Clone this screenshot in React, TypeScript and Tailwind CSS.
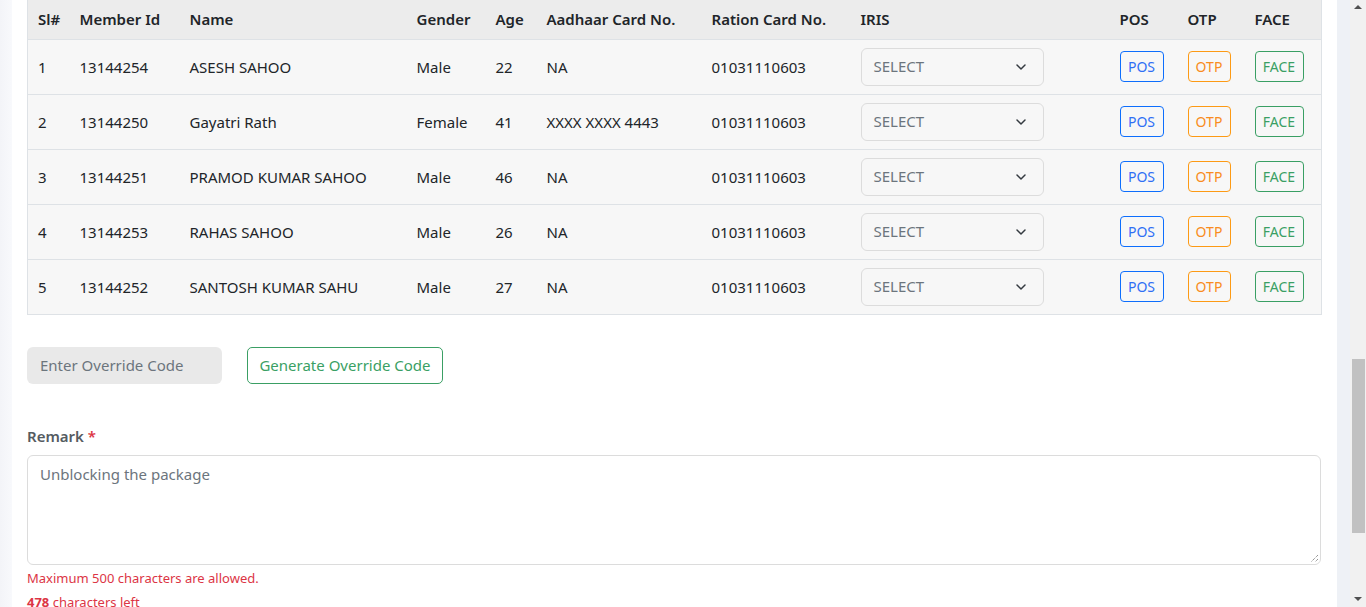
import { ChevronDown } from "lucide-react";

const members = [
  { sl: 1, id: "13144254", name: "ASESH SAHOO", gender: "Male", age: 22, aadhaar: "NA", ration: "01031110603" },
  { sl: 2, id: "13144250", name: "Gayatri Rath", gender: "Female", age: 41, aadhaar: "XXXX XXXX 4443", ration: "01031110603" },
  { sl: 3, id: "13144251", name: "PRAMOD KUMAR SAHOO", gender: "Male", age: 46, aadhaar: "NA", ration: "01031110603" },
  { sl: 4, id: "13144253", name: "RAHAS SAHOO", gender: "Male", age: 26, aadhaar: "NA", ration: "01031110603" },
  { sl: 5, id: "13144252", name: "SANTOSH KUMAR SAHU", gender: "Male", age: 27, aadhaar: "NA", ration: "01031110603" },
];

const headers = ["Sl#", "Member Id", "Name", "Gender", "Age", "Aadhaar Card No.", "Ration Card No.", "IRIS", "POS", "OTP", "FACE"];

function MemberTable() {
  return (
    <table className="w-[1294px] table-fixed border-collapse border-x border-b border-[#dee2e6] text-[15px] text-[#212529]">
      <colgroup>
        <col className="w-[42px]" />
        <col className="w-[110px]" />
        <col className="w-[227px]" />
        <col className="w-[79px]" />
        <col className="w-[51px]" />
        <col className="w-[165px]" />
        <col className="w-[149px]" />
        <col className="w-[259px]" />
        <col className="w-[68px]" />
        <col className="w-[67px]" />
        <col className="w-[77px]" />
      </colgroup>
      <thead>
        <tr className="h-[39px] bg-[#ececec]">
          {headers.map((h) => (
            <th key={h} className="px-[10px] pb-[1px] text-left font-semibold">
              {h}
            </th>
          ))}
        </tr>
      </thead>
      <tbody>
        {members.map((m) => (
          <tr key={m.id} className="h-[55px] border-t border-[#dee2e6] bg-[#f7f7f7]">
            <td className="px-[10px] pt-[1px]">{m.sl}</td>
            <td className="px-[10px] pt-[1px]">{m.id}</td>
            <td className="px-[10px] pt-[1px]">{m.name}</td>
            <td className="px-[10px] pt-[1px]">{m.gender}</td>
            <td className="px-[10px] pt-[1px]">{m.age}</td>
            <td className="px-[10px] pt-[1px]">{m.aadhaar}</td>
            <td className="px-[10px] pt-[1px]">{m.ration}</td>
            <td className="px-[10px]">
              <div className="flex h-[38px] w-[183px] items-center justify-between rounded-[6px] border border-[#dcdcdc] pl-[12px] pr-[14px] text-[#6c757d]">
                <span>SELECT</span>
                <ChevronDown size={16} strokeWidth={2.2} className="text-[#343a40]" />
              </div>
            </td>
            <td className="px-[10px]">
              <button className="h-[31px] w-[44px] rounded-[4px] border border-[#0d6efd] text-[14px] text-[#2f6ff5]">POS</button>
            </td>
            <td className="px-[10px]">
              <button className="h-[31px] w-[43px] rounded-[4px] border border-[#fd9a14] text-[14px] text-[#f98c20]">OTP</button>
            </td>
            <td className="px-[10px]">
              <button className="h-[31px] w-[49px] rounded-[4px] border border-[#3a9f64] text-[14px] text-[#3a9f64]">FACE</button>
            </td>
          </tr>
        ))}
      </tbody>
    </table>
  );
}

export default function App() {
  return (
    <div className="flex h-[607px] w-[1366px] overflow-hidden bg-[#f5f6fa] font-['Noto_Sans','Open_Sans',sans-serif]">
      {/* page edge */}
      <div className="w-[12px] bg-gradient-to-r from-[#f3f4f8] to-[#f8f9fc]" />

      {/* card */}
      <div className="w-[1325px] bg-white px-[15px]">
        <MemberTable />

        <div className="mt-[32px] flex gap-[25px]">
          <div className="flex h-[37px] w-[195px] items-center rounded-[6px] bg-[#e9e9e9] px-[13px] text-[15px] text-[#6c757d]">
            Enter Override Code
          </div>
          <button className="h-[37px] w-[196px] rounded-[5px] border border-[#3a9f64] text-[15px] text-[#3a9f64]">
            Generate Override Code
          </button>
        </div>

        <div className="mt-[41px] text-[15px] font-semibold text-[#555b61]">
          Remark <span className="text-[#dc3545]">*</span>
        </div>
        <div className="relative mt-[8px] h-[110px] w-[1294px] rounded-[6px] border border-[#dcdcdc] px-[12px] py-[7px] text-[15px] text-[#6c757d]">
          Unblocking the package
          {/* resize grip */}
          <svg width="9" height="9" viewBox="0 0 9 9" className="absolute bottom-[1px] right-[1px]">
            <line x1="8" y1="1" x2="1" y2="8" stroke="#6b6b6b" strokeWidth="1" strokeDasharray="1 1" />
            <line x1="8" y1="5" x2="5" y2="8" stroke="#6b6b6b" strokeWidth="1" strokeDasharray="1 1" />
          </svg>
        </div>
        <div className="mt-[4px] text-[13px] leading-[18px] text-[#dc3545]">Maximum 500 characters are allowed.</div>
        <div className="mt-[6px] text-[13px] leading-[18px] text-[#dc3545]">
          <span className="font-bold">478</span> characters left
        </div>
      </div>

      {/* background strip */}
      <div className="w-[13px] bg-[#eef1f6]" />

      {/* scrollbar */}
      <div className="flex w-[16px] flex-col items-center bg-[#f1f1f1]">
        <div className="mt-[5px] h-0 w-0 border-x-[4px] border-b-[4px] border-x-transparent border-b-[#505050]" />
        <div className="mt-[350px] h-[174px] w-[13px] bg-[#c1c1c1]" />
        <div className="mt-auto mb-[6px] h-0 w-0 border-x-[4px] border-t-[4px] border-x-transparent border-t-[#505050]" />
      </div>
    </div>
  );
}
